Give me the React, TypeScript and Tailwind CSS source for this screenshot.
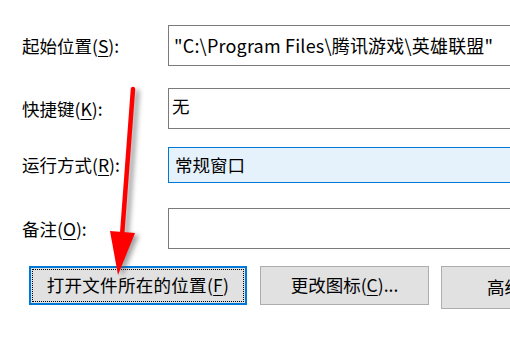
import React from "react";

const font = { fontFamily: '"Noto Sans CJK SC", "Noto Sans", sans-serif' };

function Label({ text, k }: { text: string; k: string }) {
  return (
    <div className="w-[168px] shrink-0 pl-[22px] text-[17.5px] text-black leading-none">
      {text}(<span className="underline underline-offset-[3px]">{k}</span>):
    </div>
  );
}

export default function App() {
  return (
    <div
      className="relative w-[510px] h-[340px] bg-white overflow-hidden text-black"
      style={font}
    >
      <div className="flex flex-col pt-[25px]">
        <div className="flex items-center h-[41px]">
          <Label text="起始位置" k="S" />
          <div className="h-[41px] w-[380px] shrink-0 border border-[#7a7a7a] flex items-center pl-[5px] text-[18px] tracking-[0.2px] whitespace-nowrap">
            "C:\Program Files\腾讯游戏\英雄联盟"
          </div>
        </div>
        <div className="flex items-center h-[41px] mt-[22px]">
          <Label text="快捷键" k="K" />
          <div className="h-[41px] w-[380px] shrink-0 border border-[#7a7a7a] pl-[3px] pt-[8px] text-[17.5px] leading-none">
            无
          </div>
        </div>
        <div className="flex items-center h-[36px] mt-[18px]">
          <Label text="运行方式" k="R" />
          <div className="h-[36px] w-[380px] shrink-0 border border-[#0078d7] bg-[#e5f1fb] flex items-center pl-[6px] text-[17.5px]">
            常规窗口
          </div>
        </div>
        <div className="flex items-center h-[41px] mt-[25px]">
          <Label text="备注" k="O" />
          <div className="h-[41px] w-[380px] shrink-0 border border-[#7a7a7a]" />
        </div>
        <div className="flex items-start mt-[17px] pl-[29px]">
          <div className="w-[218px] h-[39px] shrink-0 border-2 border-[#0078d7] bg-[#e1e1e1] p-[1px]">
            <div className="w-full h-full border border-dotted border-black flex items-center justify-center text-[17.5px] tracking-[0.3px]">
              打开文件所在的位置(<span className="underline underline-offset-[3px]">F</span>)
            </div>
          </div>
          <div className="ml-[13px] w-[169px] h-[39px] shrink-0 border border-[#adadad] bg-[#e1e1e1] flex items-center justify-center text-[17.5px]">
            更改图标(<span className="underline underline-offset-[3px]">C</span>)...
          </div>
          <div className="ml-[12px] w-[100px] h-[43px] shrink-0 border border-[#adadad] bg-[#e1e1e1] flex items-center pl-[45px] text-[17.5px] whitespace-nowrap">
            高级(D)...
          </div>
        </div>
      </div>
      <svg
        className="absolute left-0 top-0 pointer-events-none"
        width="510"
        height="340"
        viewBox="0 0 510 340"
      >
        <defs>
          <filter id="sh" x="-50%" y="-50%" width="200%" height="200%">
            <feGaussianBlur stdDeviation="2.5" />
          </filter>
        </defs>
        <g filter="url(#sh)" opacity="0.55" transform="translate(4,3)">
          <line x1="133" y1="89" x2="122" y2="236" stroke="#555" strokeWidth="5" strokeLinecap="round" />
          <polygon points="110,232 135,232 118,274" fill="#555" />
        </g>
        <line x1="133" y1="89" x2="122" y2="236" stroke="#ff0000" strokeWidth="4.5" strokeLinecap="round" />
        <polygon points="110,231 135,233 118,275" fill="#ff0000" />
      </svg>
    </div>
  );
}
